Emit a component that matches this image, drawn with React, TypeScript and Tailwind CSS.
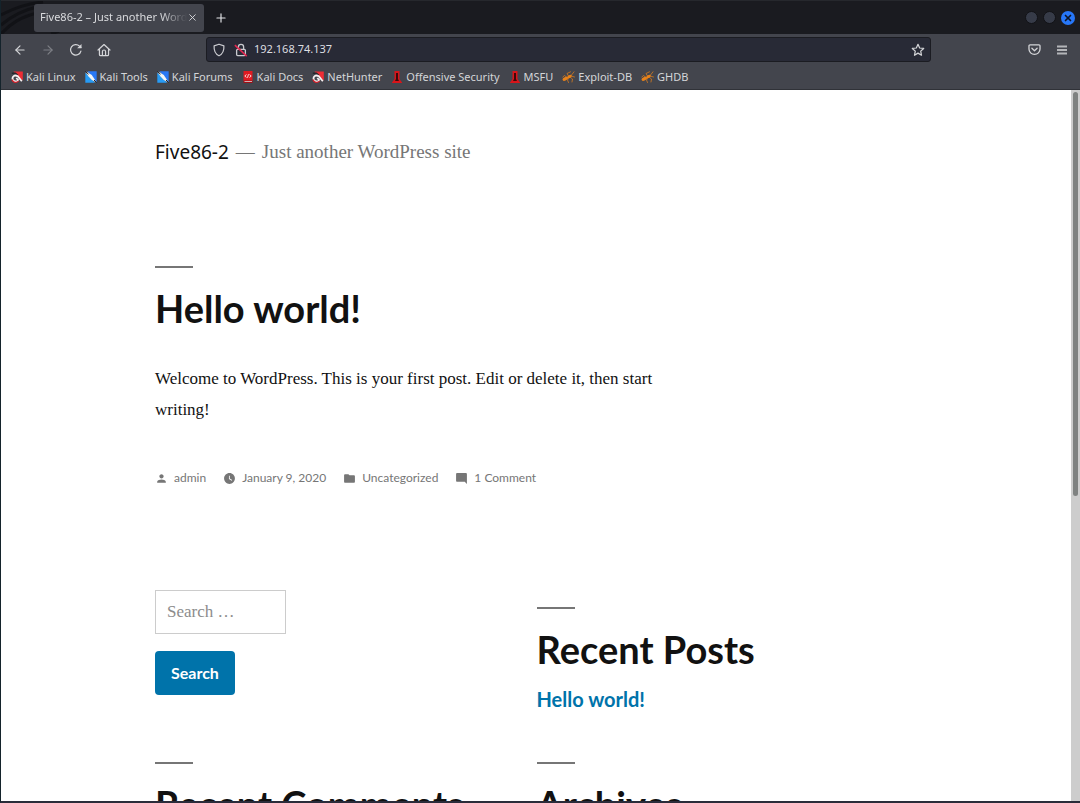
import type { ReactNode } from "react";
import { X, Plus, ArrowLeft, ArrowRight } from "lucide-react";
import { MdPerson, MdWatchLater, MdFolder, MdModeComment } from "react-icons/md";

const chrome = "font-['Noto_Sans',sans-serif]";
const sans = "font-['Lato',sans-serif]";
const serif = "font-['Liberation_Serif',serif]";

function ReloadIcon() {
  return (
    <svg viewBox="0 0 16 16" className="size-[14px]" fill="none" stroke="currentColor" strokeWidth="1.4" strokeLinecap="round">
      <path d="M13.6 9.2A6 6 0 1 1 12 3.5l1.6 1.6" />
      <path d="M14.3 1v5H9.3z" fill="currentColor" stroke="none" />
    </svg>
  );
}

function HomeIcon() {
  return (
    <svg viewBox="0 0 16 16" className="size-[14px]" fill="none" stroke="currentColor" strokeWidth="1.4" strokeLinecap="round" strokeLinejoin="round">
      <path d="M1.2 8 8 1.8 14.8 8" />
      <path d="M2.8 7v6a1.4 1.4 0 0 0 1.4 1.4h7.6a1.4 1.4 0 0 0 1.4-1.4V7" />
      <path d="M6.2 14V9.8a1.8 1.8 0 0 1 3.6 0V14" />
    </svg>
  );
}

function ShieldIcon() {
  return (
    <svg viewBox="0 0 16 16" className="size-[14px]" fill="none" stroke="#c9cacf" strokeWidth="1.4" strokeLinejoin="round">
      <path d="M8 1.4 13.6 3.3c.3 4.8-.7 9-5.6 11.3C3.1 12.3 2.1 8.1 2.4 3.3z" />
    </svg>
  );
}

function InsecureLockIcon() {
  return (
    <svg viewBox="0 0 16 16" className="size-[14px]" fill="none" stroke="#c9cacf" strokeWidth="1.5" strokeLinejoin="round">
      <rect x="3" y="7.2" width="10" height="7.2" rx="1.2" />
      <path d="M5 7V4.6a3 3 0 0 1 6 0V7" />
      <path d="M1 2.5 14.5 15" stroke="#e22850" strokeWidth="1.8" />
    </svg>
  );
}

function StarIcon() {
  return (
    <svg viewBox="0 0 16 16" className="size-[14px]" fill="none" stroke="#d4d5d8" strokeWidth="1.4" strokeLinejoin="round">
      <path d="M8 1.5 9.9 5.7l4.6.5-3.4 3.1.9 4.7-4-2.4L4 14l.9-4.7L1.5 6.2l4.6-.5z" />
    </svg>
  );
}

function PocketIcon() {
  return (
    <svg viewBox="0 0 16 16" className="size-[13px]" fill="none" stroke="currentColor" strokeWidth="1.6" strokeLinecap="round" strokeLinejoin="round">
      <path d="M2.5 2.2h11a1.3 1.3 0 0 1 1.3 1.3V7.500a6.8 6.6 0 0 1-13.6 0V3.5a1.3 1.3 0 0 1 1.3-1.3z" />
      <path d="m4.8 6.5 3.2 3 3.2-3" />
    </svg>
  );
}

function MenuIcon() {
  return (
    <svg viewBox="0 0 12 12" className="size-[12px]" fill="#b4b5b9">
      <path d="M1 1.5h10v2H1zM1 5h10v2H1zM1 8.5h10v2H1z" />
    </svg>
  );
}

function RedMagnetIcon() {
  return (
    <svg viewBox="0 0 12 12" className="size-[12px]">
      <path d="M2.5.5h9.3v9L8 7z" fill="#ee2d35" />
      <path d="M.8 2.3h3.7L7 4.500" stroke="#24272d" strokeWidth="1.6" fill="none" />
      <path d="M10.8 10.300 6.800 5.300C3.500 3.200.7 5.800 1.800 8.600c1.100 2.500 4.600 2.300 5.300.4L5.300 7" fill="none" stroke="#f4f1f1" strokeWidth="1.8" />
      <path d="M.9 8.500c1 3.200 4.600 3.800 6.900 1.300" fill="none" stroke="#d3222c" strokeWidth="1.2" />
    </svg>
  );
}

function BlueKnifeIcon() {
  return (
    <svg viewBox="0 0 12 12" className="size-[12px]">
      <path d="M2.5.3h9.200v11z" fill="#2878f5" />
      <path d="M.3 1.5 10 11.700H.3z" fill="#279bf5" />
      <path d="m0 .2 3 1.400L6.800 4l2 3 3 4.700L6.800 9 3.500 5.600z" fill="#f2f5f7" />
      <path d="m0 .2 3.500 3M9 9l2.800 2.800" stroke="#20242b" strokeWidth="1" />
    </svg>
  );
}

function DocsIcon() {
  return (
    <svg viewBox="0 0 12 12" className="size-[12px]">
      <path d="M1.500 0h9v10h-9z" fill="#e01b22" />
      <path d="M1.500 9.500h9V12h-9z" fill="#a10f15" />
      <path d="M2.500 10.200H10v.8H2.500z" fill="#dadada" />
      <path d="M4.500 3.500 2.800 5l1.700 1.500M7.500 3.500 9.200 5 7.500 6.500M6.500 3.200l-1 3.600" fill="none" stroke="#fff" strokeWidth=".8" />
    </svg>
  );
}

function TowerIcon() {
  return (
    <svg viewBox="0 0 12 12" className="size-[12px]">
      <path d="M3.500 0h5v8l2.500 3.500v.5H1v-.5L3.500 8z" fill="#d8141a" />
      <path d="M5 2h2v6l1 2H4l1-2z" fill="#3b090b" />
    </svg>
  );
}

function BugIcon() {
  return (
    <svg viewBox="0 0 13 12" className="h-[12px] w-[13px]" fill="none" stroke="#e8821a" strokeLinecap="round">
      <ellipse cx="3.3" cy="7.8" rx="2.9" ry="1.7" transform="rotate(-25 3.3 7.8)" fill="#e8821a" stroke="none" />
      <ellipse cx="7.5" cy="5.5" rx="2.5" ry="1.4" transform="rotate(-30 7.5 5.5)" fill="#e8821a" stroke="none" />
      <path d="M9.300 4.300 12 .8M6.500 5 5 2.500 8.500.8M7 6.500 5.500 9l1 2.500M8 6l2.500 2-.5 3M9 5l3.500 1M5 6.500 2.500 4.500.8 6" strokeWidth=".7" />
    </svg>
  );
}

const bookmarks: { label: string; icon: ReactNode }[] = [
  { label: "Kali Linux", icon: <RedMagnetIcon /> },
  { label: "Kali Tools", icon: <BlueKnifeIcon /> },
  { label: "Kali Forums", icon: <BlueKnifeIcon /> },
  { label: "Kali Docs", icon: <DocsIcon /> },
  { label: "NetHunter", icon: <RedMagnetIcon /> },
  { label: "Offensive Security", icon: <TowerIcon /> },
  { label: "MSFU", icon: <TowerIcon /> },
  { label: "Exploit-DB", icon: <BugIcon /> },
  { label: "GHDB", icon: <BugIcon /> },
];

const meta: { label: string; icon: ReactNode }[] = [
  { label: "admin", icon: <MdPerson /> },
  { label: "January 9, 2020", icon: <MdWatchLater /> },
  { label: "Uncategorized", icon: <MdFolder /> },
  { label: "1 Comment", icon: <MdModeComment /> },
];

function TitleBar() {
  return (
    <div className="relative flex h-[34px] shrink-0 items-center border-t border-[#26282d] bg-[#1a1b20] pl-[33px] pr-[5px]">
      <svg className="absolute left-0 top-0 h-[33px] w-[70px]" viewBox="0 0 70 33" fill="none" stroke="#111216" strokeWidth="3">
        <path d="M0 14C14 7 24 3 42 1M0 24C12 14 22 9 36 6M0 33C10 22 20 16 36 12M50 33l8-3" />
      </svg>
      <div className="relative flex h-[28px] w-[170px] items-center rounded-[3px] bg-[#43454d] pl-[6px] pr-[6px] text-[#d9dadd]">
        <span className="min-w-0 flex-1 overflow-hidden whitespace-nowrap text-[11px] [mask-image:linear-gradient(to_right,#000_82%,transparent)]">
          Five86-2 – Just another WordPress site
        </span>
        <button type="button" aria-label="Close tab" className="shrink-0">
          <X className="size-[11px]" strokeWidth={2} />
        </button>
      </div>
      <button type="button" aria-label="New tab" className="ml-[10px] text-[#e4e5e8]">
        <Plus className="size-[14px]" strokeWidth={2} />
      </button>
      <div className="ml-auto flex items-center gap-[5px]">
        <button type="button" aria-label="Minimize" className="size-[13px] rounded-full border border-[#111216] bg-[#363b48]" />
        <button type="button" aria-label="Maximize" className="size-[13px] rounded-full border border-[#111216] bg-[#363b48]" />
        <button type="button" aria-label="Close window" className="flex size-[14px] items-center justify-center rounded-full bg-[#2777f8] text-[#0e1524]">
          <X className="size-[10px]" strokeWidth={4} />
        </button>
      </div>
    </div>
  );
}

function NavBar() {
  return (
    <div className="flex h-[31px] shrink-0 items-center pl-[12px] pr-[12px] text-[#d4d5d8]">
      <div className="flex w-[193px] shrink-0 items-center gap-[14px]">
        <button type="button" aria-label="Back"><ArrowLeft className="size-[14px]" /></button>
        <button type="button" aria-label="Forward" className="text-[#7d7f85]"><ArrowRight className="size-[14px]" /></button>
        <button type="button" aria-label="Reload"><ReloadIcon /></button>
        <button type="button" aria-label="Home"><HomeIcon /></button>
      </div>
      <div className="mr-[97px] flex h-[25px] flex-1 items-center rounded-[3px] border border-[#1b1c22] bg-[#282a36] px-[5px]">
        <ShieldIcon />
        <span className="ml-[8px]"><InsecureLockIcon /></span>
        <input aria-label="Address" defaultValue="192.168.74.137" className="ml-[6px] min-w-0 flex-1 bg-transparent text-[11px] text-[#dddee1] outline-none" />
        <button type="button" aria-label="Bookmark this page"><StarIcon /></button>
      </div>
      <div className="flex items-center gap-[15px]">
        <button type="button" aria-label="Save to Pocket"><PocketIcon /></button>
        <button type="button" aria-label="Open menu"><MenuIcon /></button>
      </div>
    </div>
  );
}

function BookmarksBar() {
  return (
    <nav className="flex h-[25px] shrink-0 items-center gap-[9px] border-b border-[#303238] pl-[10px] text-[11px] text-[#d4d5d8]">
      {bookmarks.map((b) => (
        <a key={b.label} href="#" className="flex items-center gap-[3px] whitespace-nowrap">
          {b.icon}
          {b.label}
        </a>
      ))}
    </nav>
  );
}

function Heading({ children }: { children: ReactNode }) {
  return (
    <h2 className="whitespace-nowrap text-[38px] font-bold leading-[46px] text-[#111] before:mb-[17px] before:block before:h-[2px] before:w-[38px] before:bg-[#767676]">
      {children}
    </h2>
  );
}

export default function App() {
  return (
    <div className={`${chrome} flex h-screen flex-col overflow-hidden border-b-2 border-l border-[#2a2c3a] border-l-[#14232b] bg-[#43454d]`}>
      <TitleBar />
      <NavBar />
      <BookmarksBar />
      <div className="flex min-h-0 flex-1 bg-white">
        <main className={`${sans} min-w-0 flex-1 overflow-hidden pl-[154px] pr-[153px] pt-[48px]`}>
          <header className="flex items-center whitespace-nowrap leading-[28px]">
            <h1 className={`${chrome} text-[19px] text-[#111]`}><a href="#">Five86-2</a></h1>
            <p className={`${serif} ml-[7px] text-[19px] text-[#767676]`}>
              <span className="mr-[7px]">—</span>Just another WordPress site
            </p>
          </header>
          <article className="mt-[100px]">
            <Heading>Hello world!</Heading>
            <p className={`${serif} mt-[32px] max-w-[510px] text-[17px] leading-[31px] text-[#111]`}>
              Welcome to WordPress. This is your first post. Edit or delete it, then start writing!
            </p>
            <footer className="mt-[43px] flex gap-[17px] text-[12px] leading-[20px] text-[#767676]">
              {meta.map((m) => (
                <a key={m.label} href="#" className="flex items-center whitespace-nowrap">
                  <span className="mr-[6px] text-[13px]">{m.icon}</span>
                  {m.label}
                </a>
              ))}
            </footer>
          </article>
          <aside className="mt-[102px] grid grid-cols-2">
            <form className="flex h-[172px] flex-col items-start" onSubmit={(e) => e.preventDefault()}>
              <input aria-label="Search" type="search" placeholder="Search …" className={`${serif} h-[44px] w-[131px] border border-[#ccc] px-[11px] text-[17px] placeholder:text-[#8c8c8c]`} />
              <button type="submit" className="mt-[17px] h-[44px] rounded-[4px] bg-[#0073aa] px-[16px] text-[16px] font-bold text-white">Search</button>
            </form>
            <section className="pt-[17px]">
              <Heading>Recent Posts</Heading>
              <a href="#" className="mt-[13px] block text-[20px] font-bold leading-[28px] text-[#0073aa]">Hello world!</a>
            </section>
            <section><Heading>Recent Comments</Heading></section>
            <section><Heading>Archives</Heading></section>
          </aside>
        </main>
        <div className="w-[9px] shrink-0 bg-[#cdcdcd] px-[2px] pt-[2px]">
          <div className="h-[57%] w-[5px] rounded-full bg-[#7f8281]" />
        </div>
      </div>
    </div>
  );
}
